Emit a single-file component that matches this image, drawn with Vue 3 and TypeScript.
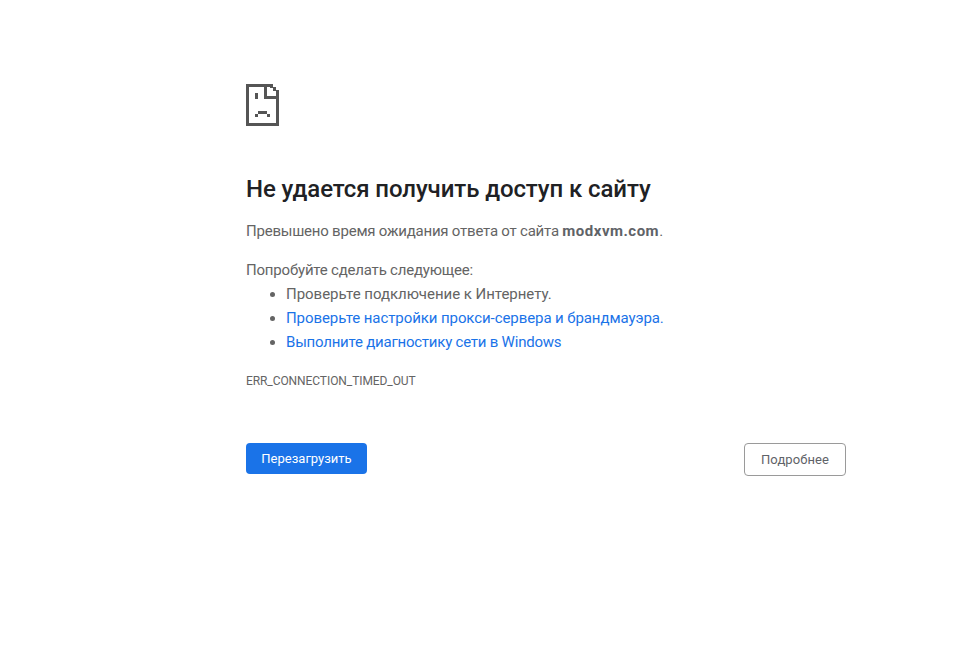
<script setup lang="ts">
const host = 'modxvm.com'
</script>

<template>
  <main class="page">
    <svg class="icon" width="33" height="42" viewBox="0 0 33 42" shape-rendering="crispEdges" aria-hidden="true">
      <path fill="#555" d="M0 0h27v3h3v3h3v36H0zM3 3v36h27V15H18V3zM21 3v9h9V7h-3V4h-3V3z" fill-rule="evenodd" />
      <path fill="#555" d="M9 9h3v6H9zM12 27h9v3h3v3h-3v-3h-9v3H9v-3h3z" />
    </svg>
    <h1>Не удается получить доступ к сайту</h1>
    <p class="summary">Превышено время ожидания ответа от сайта <strong>{{ host }}</strong>.</p>
    <p class="try">Попробуйте сделать следующее:</p>
    <ul>
      <li class="check">Проверьте подключение к Интернету.</li>
      <li class="proxy"><a href="#">Проверьте настройки прокси-сервера и брандмауэра.</a></li>
      <li class="diag"><a href="#">Выполните диагностику сети в Windows</a></li>
    </ul>
    <div class="code">ERR_CONNECTION_TIMED_OUT</div>
    <div class="actions">
      <button class="primary">Перезагрузить</button>
      <button class="secondary">Подробнее</button>
    </div>
  </main>
</template>

<style>
html, body { background: #fff; }
</style>

<style scoped>
.page {
  box-sizing: border-box;
  width: 846px;
  padding: 84px 0 0 246px;
  color: #646464;
  font-family: Roboto, "Noto Sans", sans-serif;
  font-size: 15px;
  line-height: 24px;
}
.icon { display: block; }
h1 {
  margin: 45px 0 0;
  color: #202124;
  font-size: 24px;
  font-weight: 500;
  line-height: 36px;
  letter-spacing: -0.09px;
}
.summary { margin: 12px 0 0; letter-spacing: -0.22px; }
.summary strong { color: #5f6368; letter-spacing: 0.5px; }
.try { margin: 15px 0 0; letter-spacing: -0.2px; }
ul { margin: 0; padding: 0 0 0 40px; }
.check { letter-spacing: -0.03px; }
.proxy { letter-spacing: -0.08px; }
.diag { letter-spacing: -0.22px; }
a { color: #1a73e8; text-decoration: none; }
.code {
  margin-top: 15px;
  font-size: 12px;
  line-height: 24px;
  letter-spacing: -0.08px;
}
.actions {
  display: flex;
  justify-content: space-between;
  align-items: flex-start;
  margin-top: 50px;
}
button {
  box-sizing: border-box;
  font: inherit;
  font-size: 13px;
  line-height: 16px;
  border-radius: 4px;
}
.primary {
  width: 121px;
  height: 31px;
  border: 0;
  background: #1a73e8;
  color: #fff;
}
.secondary {
  width: 102px;
  height: 33px;
  border: 1px solid #9a9a9a;
  background: #fff;
  color: #5f6368;
  letter-spacing: 0.1px;
}
</style>
